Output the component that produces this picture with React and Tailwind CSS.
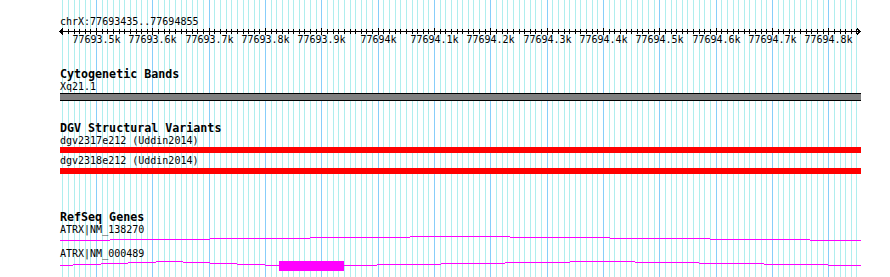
import React from "react";

// --- scale helpers ---
const START = 77693435;
const toX = (bp) => Math.floor(60 + (bp - START) * 0.5632) + 0.5;

const minorTicks = [];
for (let bp = 77693440; bp <= 77694855; bp += 10) minorTicks.push(bp);
const majorTicks = minorTicks.filter((bp) => bp % 100 === 0);

const fmtLabel = (bp) => {
  const k = bp / 1000;
  return Number.isInteger(k) ? `${k}k` : `${k.toFixed(1)}k`;
};

// gene connector steps: [x0, x1, y] in page coords
const gene1 = [
  [60, 110, 240], [110, 210, 239], [210, 310, 238], [310, 410, 237], [410, 510, 236],
  [510, 610, 237], [610, 710, 238], [710, 810, 239], [810, 861, 240],
];
const gene2 = [
  [60, 73, 265], [73, 101, 264], [101, 128, 263], [128, 156, 262], [156, 183, 261],
  [183, 210, 262], [210, 237, 263], [237, 265, 264], [265, 279, 265],
  [344, 377, 265], [377, 441, 264], [441, 505, 263], [505, 570, 262], [570, 635, 261],
  [635, 699, 262], [699, 764, 263], [764, 828, 264], [828, 861, 265],
];

const GridLines = () => (
  <svg className="absolute inset-0" width="890" height="277" shapeRendering="crispEdges">
    {minorTicks.map((bp) => (
      <line key={bp} x1={toX(bp)} x2={toX(bp)} y1="0" y2="277" stroke={bp % 100 === 0 ? "#87cefa" : "#afeeee"} strokeWidth="1" />
    ))}
  </svg>
);

const Ruler = () => (
  <div className="relative h-[20px] -ml-[60px] w-[890px]">
    <svg className="absolute inset-0" width="890" height="20" shapeRendering="crispEdges">
      <line x1="60" x2="861" y1="3.5" y2="3.5" stroke="#000" />
      <polyline points="63,0.5 60,3.5 63,6.5" fill="none" stroke="#000" />
      <polyline points="857,0.5 860,3.5 857,6.5" fill="none" stroke="#000" />
      {minorTicks.map((bp) =>
        bp % 100 === 0 ? (
          <line key={bp} x1={toX(bp)} x2={toX(bp)} y1="0" y2="7" stroke="#000" />
        ) : (
          <line key={bp} x1={toX(bp)} x2={toX(bp)} y1="1" y2="6" stroke="#000" />
        )
      )}
    </svg>
    {majorTicks.map((bp) => (
      <span
        key={bp}
        className="absolute top-[5px] -translate-x-1/2 text-[10px] leading-[13px] whitespace-nowrap"
        style={{ left: toX(bp) }}
      >
        {fmtLabel(bp)}
      </span>
    ))}
  </div>
);

const Title = ({ children, className = "" }) => (
  <div className={`h-[12px] text-[11.67px] leading-[12px] font-bold whitespace-nowrap ${className}`}>{children}</div>
);
const Label = ({ children, className = "" }) => (
  <div className={`h-[13px] text-[10px] leading-[13px] whitespace-nowrap ${className}`}>{children}</div>
);

const Steps = ({ segs, top, height, children }) => (
  <svg width="801" height={height} className="block" shapeRendering="crispEdges">
    {segs.map(([x0, x1, y], i) => (
      <rect key={i} x={x0 - 60} y={y - top} width={x1 - x0} height="1" fill="#ff00ff" />
    ))}
    {children}
  </svg>
);

export default function App() {
  return (
    <div className="relative w-[890px] h-[277px] overflow-hidden bg-white text-black font-['DejaVu_Sans_Mono',monospace]">
      <GridLines />
      <div className="relative pl-[60px] pt-[15px]">
        <Label>chrX:77693435..77694855</Label>
        <Ruler />

        {/* Cytogenetic Bands */}
        <Title className="mt-[20px]">Cytogenetic Bands</Title>
        <Label>Xq21.1</Label>
        <div className="w-[801px] h-[8px] bg-[#808080] border-y border-black" />

        {/* DGV */}
        <Title className="mt-[21px]">DGV Structural Variants</Title>
        <Label>dgv2317e212 (Uddin2014)</Label>
        <div className="w-[801px] h-[6px] bg-[#ff0000]" />
        <Label className="mt-[1px]">dgv2318e212 (Uddin2014)</Label>
        <div className="w-[801px] h-[6px] mt-[1px] bg-[#ff0000]" />

        {/* RefSeq */}
        <Title className="mt-[37px]">RefSeq Genes</Title>
        <Label>ATRX|NM_138270</Label>
        <Steps segs={gene1} top={236} height={6} />
        <Label className="mt-[5px]">ATRX|NM_000489</Label>
        <Steps segs={gene2} top={260} height={12}>
          <rect x={279 - 60} y={1} width={65} height={10} fill="#ff00ff" />
        </Steps>
      </div>
    </div>
  );
}
